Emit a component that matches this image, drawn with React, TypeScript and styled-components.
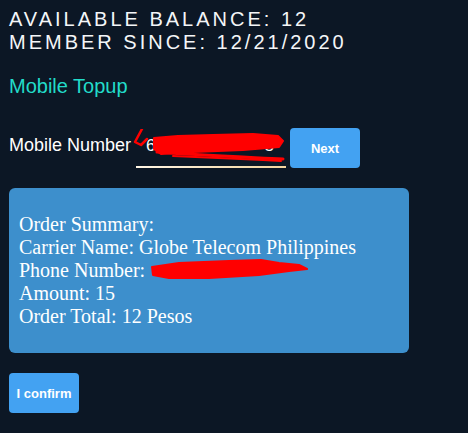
import React from "react";
import styled, { createGlobalStyle } from "styled-components";

const GlobalStyle = createGlobalStyle`
	html, body {
		margin: 0;
		background: #0c1725;
	}
	body {
		font-family: "Liberation Sans", Arial, sans-serif;
		color: #ffffff;
	}
`;

const Page = styled.div`
	padding: 8px 9px;
	display: flex;
	flex-direction: column;
	align-items: flex-start;
`;

const Stats = styled.div`
	font-size: 20px;
	line-height: 23px;
	letter-spacing: 3px;
	text-transform: uppercase;
	color: #f4f6f8;
`;

const Title = styled.h2`
	margin: 21px 0 0;
	font-size: 20px;
	line-height: 23px;
	font-weight: normal;
	color: #22dcca;
`;

const Row = styled.div`
	margin-top: 30px;
	display: flex;
	align-items: flex-end;
	height: 40px;
`;

const Label = styled.label`
	font-size: 18px;
	line-height: 21px;
	margin-bottom: 12px;
	margin-right: 5px;
`;

const Field = styled.div`
	position: relative;
	width: 150px;
	height: 30px;
	border-bottom: 2px solid;
	border-image: linear-gradient(90deg, #fff6e6, #f3d59e) 1;
	display: flex;
	align-items: flex-end;
	justify-content: space-between;
	padding: 0 12px 10px 10px;
	box-sizing: border-box;
	font-size: 17px;
	line-height: 20px;
	margin-right: 4px;
`;

const Scribble = styled.svg`
	position: absolute;
	pointer-events: none;
`;

const Button = styled.button`
	width: 70px;
	height: 40px;
	border: none;
	border-radius: 4px;
	background: #43a2f2;
	color: #ffffff;
	font-family: "Liberation Sans", Arial, sans-serif;
	font-weight: bold;
	font-size: 13px;
	padding: 0;
	cursor: pointer;
`;

const Summary = styled.div`
	margin-top: 20px;
	width: 400px;
	box-sizing: border-box;
	padding: 25px 10px 25px;
	background: #3d8fcc;
	border-radius: 6px;
	font-family: "Liberation Serif", "Times New Roman", serif;
	font-size: 20px;
	line-height: 23px;
	color: #ffffff;
`;

const Line = styled.div`
	position: relative;
	white-space: nowrap;
`;

const ConfirmButton = styled(Button)`
	margin-top: 20px;
`;

function InputScribble() {
	return (
		<Scribble width="154" height="34" viewBox="0 0 154 34" style={{ left: -3, top: -9 }}>
			<g fill="#ff0000" stroke="#ff0000" strokeLinecap="round" strokeLinejoin="round">
				<path d="M9 0 L2 13 L8 16 L14 10" fill="none" strokeWidth="2.5" />
				<path d="M21 9 L45 7 L80 6 L120 5 L145 7 L150 12 L146 18 L110 21 L60 23 L28 25 L21 20 Z" strokeWidth="2" />
				<path d="M24 23 C60 26 110 28 150 30" fill="none" strokeWidth="3" />
				<path d="M40 27 L130 31 L148 32" fill="none" strokeWidth="2" />
			</g>
		</Scribble>
	);
}

function PhoneScribble() {
	return (
		<Scribble width="162" height="22" viewBox="0 0 162 22" style={{ left: 130, top: 0 }}>
			<g fill="#ff0000" stroke="#ff0000" strokeLinecap="round" strokeLinejoin="round">
				<path d="M3 8 L30 4 L80 2 L112 1 L130 4 L150 6 L158 10 L140 12 L110 16 L60 19 L20 19 L4 16 Z" strokeWidth="2" />
			</g>
		</Scribble>
	);
}

export default function App() {
	return (
		<>
			<GlobalStyle />
			<Page>
				<Stats>
					<div>Available Balance: 12</div>
					<div>Member Since: 12/21/2020</div>
				</Stats>
				<Title>Mobile Topup</Title>
				<Row>
					<Label>Mobile Number</Label>
					<Field>
						<span>6</span>
						<span>5</span>
						<InputScribble />
					</Field>
					<Button>Next</Button>
				</Row>
				<Summary>
					<Line>Order Summary:</Line>
					<Line>Carrier Name: Globe Telecom Philippines</Line>
					<Line>
						Phone Number:
						<PhoneScribble />
					</Line>
					<Line>Amount: 15</Line>
					<Line>Order Total: 12 Pesos</Line>
				</Summary>
				<ConfirmButton>I confirm</ConfirmButton>
			</Page>
		</>
	);
}
